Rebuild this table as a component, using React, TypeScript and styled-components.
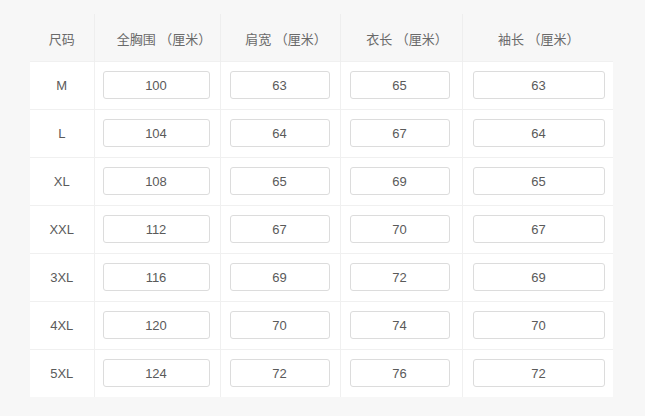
import React from "react";
import styled, { createGlobalStyle } from "styled-components";

const GlobalStyle = createGlobalStyle`
  html, body {
    margin: 0;
    padding: 0;
    background: #f7f7f7;
  }
  body {
    font-family: "Liberation Sans", "Noto Sans CJK SC", sans-serif;
  }
`;

const Page = styled.div`
  width: 645px;
  height: 416px;
  padding: 14px 0 0 30px;
  box-sizing: border-box;
  background: #f7f7f7;
`;

const Table = styled.table`
  border-collapse: collapse;
  table-layout: fixed;
  width: 583px;
`;

const HeadCell = styled.th<{ $w: number; $shift: number }>`
  box-sizing: border-box;
  width: ${p => p.$w}px;
  height: 47px;
  padding: 2px 0 0 ${p => p.$shift}px;
  font-weight: normal;
  font-size: 13px;
  color: #6a6a6a;
  text-align: center;
  font-family: "Liberation Sans", "Noto Sans CJK SC", sans-serif;
  border-left: 1px solid #eeeeee;
  &:first-child {
    border-left: none;
  }
`;

const Row = styled.tr`
  background: #ffffff;
  border-top: 1px solid #f0f0f0;
`;

const SizeCell = styled.td`
  height: 47px;
  padding: 0;
  text-align: center;
  font-size: 13px;
  color: #5a5a5a;
`;

const Cell = styled.td<{ $pl: number }>`
  box-sizing: border-box;
  height: 47px;
  padding: 0 0 0 ${p => p.$pl}px;
  border-left: 1px solid #f0f0f0;
`;

const Box = styled.div<{ $w: number }>`
  width: ${p => p.$w}px;
  height: 28px;
  box-sizing: border-box;
  border: 1px solid #dcdcdc;
  border-radius: 3px;
  background: #fff;
  display: flex;
  align-items: center;
  justify-content: center;
  font-size: 13px;
  color: #5a5a5a;
`;

const COLS = [
  { title: "全胸围 （厘米）", w: 126, box: 107, pl: 8, shift: 14 },
  { title: "肩宽 （厘米）", w: 120, box: 100, pl: 9, shift: 12 },
  { title: "衣长 （厘米）", w: 122, box: 100, pl: 9, shift: 12 },
  { title: "袖长 （厘米）", w: 151, box: 132, pl: 10, shift: 2 },
];

const ROWS: [string, number[]][] = [
  ["M", [100, 63, 65, 63]],
  ["L", [104, 64, 67, 64]],
  ["XL", [108, 65, 69, 65]],
  ["XXL", [112, 67, 70, 67]],
  ["3XL", [116, 69, 72, 69]],
  ["4XL", [120, 70, 74, 70]],
  ["5XL", [124, 72, 76, 72]],
];

export default function App(): JSX.Element {
  return (
    <>
      <GlobalStyle />
      <Page>
        <Table>
          <thead>
            <tr>
              <HeadCell $w={64} $shift={0}>尺码</HeadCell>
              {COLS.map(c => (
                <HeadCell key={c.title} $w={c.w} $shift={c.shift}>
                  {c.title}
                </HeadCell>
              ))}
            </tr>
          </thead>
          <tbody>
            {ROWS.map(([size, vals]) => (
              <Row key={size}>
                <SizeCell>{size}</SizeCell>
                {vals.map((v, i) => (
                  <Cell key={i} $pl={COLS[i].pl}>
                    <Box $w={COLS[i].box}>{v}</Box>
                  </Cell>
                ))}
              </Row>
            ))}
          </tbody>
        </Table>
      </Page>
    </>
  );
}
